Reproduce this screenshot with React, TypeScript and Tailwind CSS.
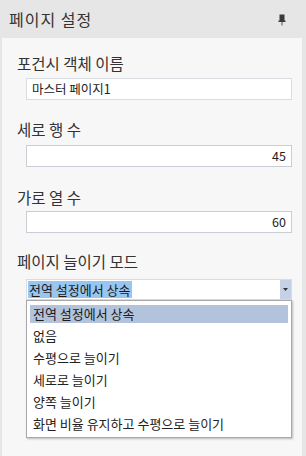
import React from "react";

const font = { fontFamily: '"Noto Sans CJK KR", "Noto Sans", sans-serif' };

function Label({ children }: { children: React.ReactNode }) {
  return (
    <div className="h-[22px] pl-[15px] text-[15.5px] leading-[22px] text-[#333333]">{children}</div>
  );
}

function NumInput({ value }: { value: string }) {
  return (
    <div className="ml-[24px] flex h-[22px] w-[266px] items-center justify-end border border-[#c9cdd4] bg-white pr-[5px] text-[12.5px] text-[#222222]">
      {value}
    </div>
  );
}

export default function App() {
  const items = [
    "없음",
    "수평으로 늘이기",
    "세로로 늘이기",
    "양쪽 늘이기",
    "화면 비율 유지하고 수평으로 늘이기",
  ];
  return (
    <div className="flex h-[456px] w-[306px] flex-col bg-[#e6e6e6]" style={font}>
      <div className="flex h-[38px] items-center justify-between pl-[9px] pr-[20px]">
        <span className="text-[16px] tracking-[1px] text-[#333333]">페이지 설정</span>
        <svg width="8" height="12" viewBox="0 0 8 12" className="mt-[2px]">
          <rect x="1.5" y="0.5" width="5" height="7" fill="#3a3a3a" />
          <rect x="0.5" y="6.5" width="7" height="1.5" fill="#3a3a3a" />
          <rect x="3.5" y="8" width="1" height="3.5" fill="#555555" />
        </svg>
      </div>
      <div className="ml-[2px] flex w-[300px] flex-1 flex-col bg-[#f7f7f7] pt-[14px]">
        <Label>포건시 객체 이름</Label>
        <div className="mt-[4px] ml-[24px] flex h-[22px] w-[266px] items-center border border-[#d9dce0] bg-white pl-[5px] text-[12.5px] text-[#222222]">
          마스터 페이지1
        </div>
        <div className="mt-[18px]">
          <Label>세로 행 수</Label>
        </div>
        <div className="mt-[5px]">
          <NumInput value="45" />
        </div>
        <div className="mt-[19px]">
          <Label>가로 열 수</Label>
        </div>
        <div className="mt-[3px]">
          <NumInput value="60" />
        </div>
        <div className="mt-[17px]">
          <Label>페이지 늘이기 모드</Label>
        </div>
        <div className="relative mt-[7px] ml-[24px] w-[266px]">
          <div className="flex h-[21px] items-center border border-[#d9dce0] bg-white">
            <div className="ml-[1px] flex h-[17px] flex-1 items-center">
              <span className="bg-[#99c6f0] px-[1px] text-[13px] leading-[17px] text-[#1a1a1a]">
                전역 설정에서 상속
              </span>
            </div>
            <div className="flex h-full w-[11px] items-center justify-center bg-[#c5d2e6]">
              <svg width="5" height="3" viewBox="0 0 5 3">
                <path d="M0 0 L5 0 L2.5 3 Z" fill="#333" />
              </svg>
            </div>
          </div>
          <div className="absolute left-0 top-[21px] w-[266px] border border-[#a8a8a8] bg-white py-[2px] shadow-[1px_1px_2px_rgba(0,0,0,0.25)]">
            <div className="flex h-[22px] items-center px-[3px]">
              <div className="flex h-[18px] flex-1 items-center bg-[#b3c3dc] pl-[3px] text-[13px] text-[#1a1a1a]">
                전역 설정에서 상속
              </div>
            </div>
            {items.map((t) => (
              <div key={t} className="flex h-[22px] items-center pl-[6px] text-[13px] text-[#222222]">
                {t}
              </div>
            ))}
          </div>
        </div>
      </div>
    </div>
  );
}
